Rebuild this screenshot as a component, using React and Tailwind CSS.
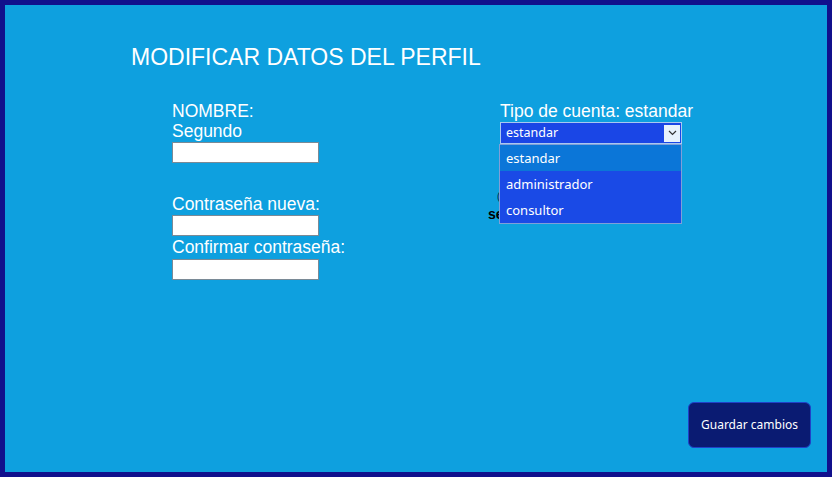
import { useState } from "react";

const opciones = ["estandar", "administrador", "consultor"];

function Campo({ className = "" }) {
  return (
    <input
      type="text"
      className={`block w-[147px] h-[21px] bg-white border border-[#7a8a96] outline-none ${className}`}
    />
  );
}

function SelectorCuenta() {
  const [valor] = useState("estandar");

  return (
    <div className="relative w-[182px]">
      <div className="flex items-center h-[22px] bg-[#1a46e6] border border-[#a9c8f0] pl-[5px] pr-[1px] text-white text-[12.5px] font-['Noto_Sans',sans-serif]">
        <span className="flex-1 leading-none">{valor}</span>
        <span className="flex items-center justify-center w-[16px] h-[17px] bg-[#e8f2fc]">
          <svg width="9" height="6" viewBox="0 0 9 6" fill="none">
            <path d="M1 1l3.5 3.5L8 1" stroke="#333" strokeWidth="1.2" />
          </svg>
        </span>
      </div>
      <div className="absolute left-[-1px] top-[22px] w-[183px] bg-[#1a4ae6] border border-[#7f9fd8] text-white text-[13px] font-['Noto_Sans',sans-serif] z-10">
        {opciones.map((op, i) => (
          <div
            key={op}
            className={`h-[26px] flex items-center pl-[6px] ${i === 0 ? "bg-[#0b76d8]" : ""}`}
          >
            {op}
          </div>
        ))}
      </div>
    </div>
  );
}

export default function App() {
  return (
    <div className="w-[832px] h-[483px] bg-white">
      <div className="w-[832px] h-[477px] border-[5px] border-[#11108c] bg-[#0ea0df] text-white font-['Liberation_Sans',Arial,sans-serif] flex flex-col">
        <h1 className="ml-[126px] mt-[38px] text-[23px] leading-[28px]">
          MODIFICAR DATOS DEL PERFIL
        </h1>

        <div className="flex mt-[30px] text-[17.5px] leading-[20px]">
          <div className="ml-[167px] w-[328px]">
            <p>NOMBRE:</p>
            <p>Segundo</p>
            <Campo className="mt-[1px]" />
            <p className="mt-[31px]">Contraseña nueva:</p>
            <Campo className="mt-[1px]" />
            <p className="mt-[1px]">Confirmar contraseña:</p>
            <Campo className="mt-[2px]" />
          </div>

          <div className="relative">
            <p>Tipo de cuenta: estandar</p>
            <div className="mt-[1px]">
              <SelectorCuenta />
            </div>
            <p className="mt-[47px] ml-[-3px] text-[10px] leading-[12px] text-[#0a1f4a]">(</p>
            <p className="ml-[-12px] mt-[4px] text-[14px] leading-[14px] font-bold text-black">
              se
            </p>
          </div>
        </div>

        <div className="mt-auto mb-[24px] mr-[16px] flex justify-end">
          <button className="w-[123px] h-[46px] rounded-[6px] bg-[#0a1b72] border border-[#2041c8] text-white text-[12px] font-['Noto_Sans',sans-serif]">
            Guardar cambios
          </button>
        </div>
      </div>
    </div>
  );
}
